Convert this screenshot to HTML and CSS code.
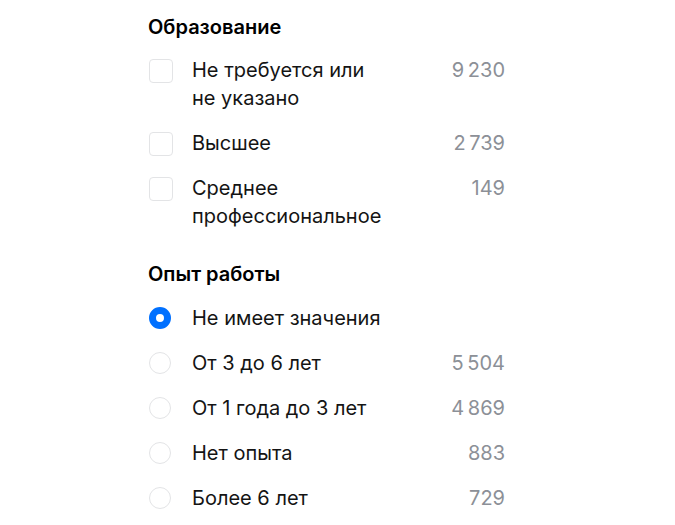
FILE: index.html
```html
<!DOCTYPE html>
<html lang="ru">
<head>
<meta charset="utf-8">
<link rel="stylesheet" href="styles.css">
</head>
<body>
<div class="filters">
  <section class="group">
    <h3 class="group-title">Образование</h3>
    <div class="options">
      <label class="option"><span class="checkbox"></span><span class="text">Не требуется или не указано</span><span class="count">9&#8239;230</span></label>
      <label class="option"><span class="checkbox"></span><span class="text">Высшее</span><span class="count">2&#8239;739</span></label>
      <label class="option"><span class="checkbox"></span><span class="text">Среднее профессиональное</span><span class="count">149</span></label>
    </div>
  </section>
  <section class="group">
    <h3 class="group-title">Опыт работы</h3>
    <div class="options options-radio">
      <label class="option"><span class="radio checked"></span><span class="text">Не имеет значения</span><span class="count"></span></label>
      <label class="option"><span class="radio"></span><span class="text">От 3 до 6 лет</span><span class="count">5&#8239;504</span></label>
      <label class="option"><span class="radio"></span><span class="text">От 1 года до 3 лет</span><span class="count">4&#8239;869</span></label>
      <label class="option"><span class="radio"></span><span class="text">Нет опыта</span><span class="count">883</span></label>
      <label class="option"><span class="radio"></span><span class="text">Более 6 лет</span><span class="count">729</span></label>
    </div>
  </section>
</div>
</body>
</html>
```
FILE: styles.css
```css
html, body {
  margin: 0;
  padding: 0;
  background: #ffffff;
}
body {
  font-family: Inter, "Noto Sans", "Liberation Sans", sans-serif;
  color: #141414;
}
.filters {
  width: 357px;
  padding: 13px 0 0 148px;
  display: flex;
  flex-direction: column;
  gap: 30px;
}
.group-title {
  margin: 0 0 15px;
  font-size: 20px;
  line-height: 28px;
  font-weight: 600;
  color: #000;
}
.options {
  display: flex;
  flex-direction: column;
  gap: 17px;
}
.options-radio {
  padding-top: 1px;
}
.option {
  display: grid;
  grid-template-columns: 24px 1fr auto;
  column-gap: 20px;
  align-items: start;
  font-size: 20px;
  line-height: 28px;
}
.text {
  max-width: 194px;
}
.count {
  color: #8c9097;
  text-align: right;
}
.checkbox {
  width: 22px;
  height: 22px;
  margin: 3px 0 0 1px;
  border: 1px solid #e3e4e6;
  border-radius: 4px;
}
.radio {
  width: 20px;
  height: 20px;
  margin: 3px 0 0 1px;
  border: 1px solid #e3e4e6;
  border-radius: 50%;
}
.radio.checked {
  width: 8px;
  height: 8px;
  border: 7px solid #0070ff;
}
```
